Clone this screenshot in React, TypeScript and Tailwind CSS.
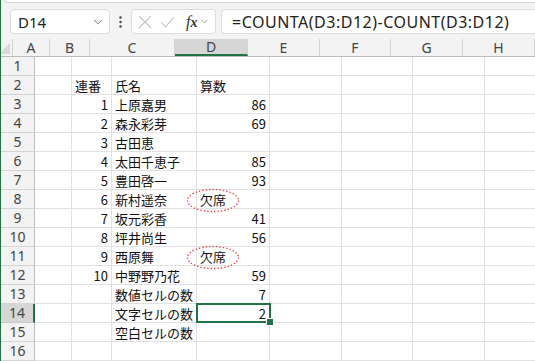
import { ChevronDown } from "lucide-react";

const cols = [
  { key: "A", w: "w-[37px]" },
  { key: "B", w: "w-[40px]" },
  { key: "C", w: "w-[85px]" },
  { key: "D", w: "w-[73px]" },
  { key: "E", w: "w-[72px]" },
  { key: "F", w: "w-[71px]" },
  { key: "G", w: "w-[72px]" },
  { key: "H", w: "w-[72px]" },
];

type Row = { b?: string; c?: string; d?: string; absent?: boolean };

const rows: Row[] = [
  {},
  { b: "連番", c: "氏名", d: "算数" },
  { b: "1", c: "上原嘉男", d: "86" },
  { b: "2", c: "森永彩芽", d: "69" },
  { b: "3", c: "古田恵" },
  { b: "4", c: "太田千恵子", d: "85" },
  { b: "5", c: "豊田啓一", d: "93" },
  { b: "6", c: "新村遥奈", d: "欠席", absent: true },
  { b: "7", c: "坂元彩香", d: "41" },
  { b: "8", c: "坪井尚生", d: "56" },
  { b: "9", c: "西原舞", d: "欠席", absent: true },
  { b: "10", c: "中野野乃花", d: "59" },
  { c: "数値セルの数", d: "7" },
  { c: "文字セルの数", d: "2" },
  { c: "空白セルの数" },
  {},
];

const isNum = (v?: string) => !!v && /^\d+$/.test(v);

function Ellipse() {
  return (
    <svg
      className="absolute left-[-11px] top-[-2px] pointer-events-none"
      width="54"
      height="25"
      viewBox="0 0 54 25"
    >
      <ellipse
        cx="27"
        cy="12.5"
        rx="25.5"
        ry="11"
        fill="none"
        stroke="#f0424a"
        strokeWidth="1.4"
        strokeDasharray="1.4 2"
      />
    </svg>
  );
}

export default function App() {
  return (
    <div
      className="w-[535px] h-[361px] overflow-hidden bg-white border-l border-[#217346] flex flex-col"
      style={{ fontFamily: '"Noto Sans CJK JP", "Noto Sans", sans-serif' }}
    >
      {/* ribbon bottom edge */}
      <div className="h-[5px] bg-[#f3f3f3] flex">
        <div className="ml-[3px] flex-1 h-[3px] bg-white border-b border-l border-[#d6d6d6] rounded-bl-[4px]" />
      </div>

      {/* formula bar */}
      <div className="h-[38px] bg-[#f3f3f3] flex items-start pt-[5px] pl-[9px] gap-0">
        <div className="w-[100px] h-[25px] bg-white border border-[#dcdcdc] rounded-[4px] flex items-center pl-[7px] pr-[4px]">
          <span className="flex-1 text-[15px] text-[#222] font-['Noto_Sans']">D14</span>
          <ChevronDown className="w-[14px] h-[14px] text-[#555]" strokeWidth={1.5} />
        </div>
        <div className="w-[21px] h-[25px] flex items-center justify-center">
          <svg width="3" height="12" viewBox="0 0 3 12">
            <circle cx="1.5" cy="1.5" r="1.2" fill="#444" />
            <circle cx="1.5" cy="6" r="1.2" fill="#444" />
            <circle cx="1.5" cy="10.5" r="1.2" fill="#444" />
          </svg>
        </div>
        <div className="w-[85px] h-[25px] bg-white border border-[#dcdcdc] rounded-[4px] flex items-center pl-[6px] gap-[8px]">
          <svg width="14" height="14" viewBox="0 0 14 14">
            <path d="M1 1 L13 13 M13 1 L1 13" stroke="#c4c4c4" strokeWidth="1.1" fill="none" />
          </svg>
          <svg width="15" height="12" viewBox="0 0 15 12">
            <path d="M1 6 L5.5 11 L14 1" stroke="#c4c4c4" strokeWidth="1.1" fill="none" />
          </svg>
          <div className="flex items-center ml-[3px]">
            <span className="text-[16px] italic text-[#333] font-['Liberation_Serif'] leading-none">
              <span>f</span>
              <span className="text-[14px] font-bold">x</span>
            </span>
            <ChevronDown className="w-[11px] h-[11px] text-[#777] ml-[2px]" strokeWidth={1.5} />
          </div>
        </div>
        <div className="flex-1 ml-[5px] h-[25px] bg-white border border-r-0 border-[#dcdcdc] rounded-l-[4px] flex items-center pl-[10px]">
          <span className="text-[16px] text-[#222] font-['Noto_Sans'] tracking-[0.5px]">
            =COUNTA(D3:D12)-COUNT(D3:D12)
          </span>
        </div>
      </div>

      {/* column headers */}
      <div className="flex h-[18px] bg-[#f3f3f3] border-b border-[#bdbdbd] text-[14px] text-[#444]">
        <div className="w-[34px] h-full border-r border-[#d4d4d4] relative">
          <div className="absolute right-[2px] bottom-[2px] w-0 h-0 border-l-[11px] border-l-transparent border-b-[11px] border-b-[#d9d9d9]" />
        </div>
        {cols.map((c) => (
          <div
            key={c.key}
            className={`${c.w} shrink-0 h-full flex items-center justify-center border-r border-[#d4d4d4] font-['Noto_Sans'] ${
              c.key === "D" ? "bg-[#d6d6d6] border-b-2 border-b-[#217346]" : ""
            }`}
          >
            {c.key}
          </div>
        ))}
      </div>

      {/* rows */}
      {rows.map((r, i) => {
        const n = i + 1;
        const sel = n === 14;
        return (
          <div key={n} className="flex h-[19px] shrink-0 text-[13px] text-[#111] leading-none">
            <div
              className={`w-[34px] shrink-0 h-full flex items-center justify-center border-b border-r text-[14px] text-[#444] font-['Noto_Sans'] ${
                sel
                  ? "bg-[#d6d6d6] border-r-2 border-r-[#217346] border-b-[#c8c8c8]"
                  : "bg-[#f3f3f3] border-[#d4d4d4] border-r-[#bdbdbd]"
              }`}
            >
              {n}
            </div>
            {cols.map((c) => {
              const v = c.key === "B" ? r.b : c.key === "C" ? r.c : c.key === "D" ? r.d : undefined;
              const num = isNum(v);
              const selCell = sel && c.key === "D";
              return (
                <div
                  key={c.key}
                  className={`${c.w} shrink-0 h-full relative flex items-center px-[3px] border-r border-b border-[#e1e1e1] whitespace-nowrap ${
                    num ? "justify-end" : "justify-start"
                  } ${selCell ? "z-10" : ""}`}
                >
                  {v}
                  {c.key === "D" && r.absent && <Ellipse />}
                  {selCell && (
                    <div className="absolute left-[-1px] top-[-1px] right-[-2px] bottom-[-1px] border-2 border-[#217346] pointer-events-none">
                      <div className="absolute right-[-5px] bottom-[-5px] w-[8px] h-[8px] bg-[#217346] border border-white z-20" />
                    </div>
                  )}
                </div>
              );
            })}
          </div>
        );
      })}
    </div>
  );
}
